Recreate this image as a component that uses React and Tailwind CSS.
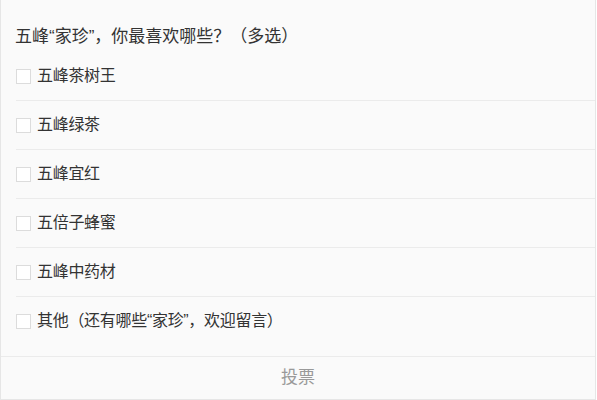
import React, { useState } from "react";

const options = [
  "五峰茶树王",
  "五峰绿茶",
  "五峰宜红",
  "五倍子蜂蜜",
  "五峰中药材",
  "其他（还有哪些“家珍”，欢迎留言）",
];

export default function App() {
  const [checked, setChecked] = useState([]);

  const toggle = (i) => {
    setChecked((c) => (c.includes(i) ? c.filter((x) => x !== i) : [...c, i]));
  };

  return (
    <div
      className="w-[596px] h-[400px] bg-[#fafafa] border-l border-r border-b border-[#e6e6e6] flex flex-col text-[#333]"
      style={{ fontFamily: '"Liberation Sans", "Noto Sans CJK SC", sans-serif' }}
    >
      <div className="px-[14px] pt-[26px] pb-[4px] text-[17px] leading-[22px]">
        五峰“家珍”，你最喜欢哪些？（多选）
      </div>

      <div className="flex flex-col pb-[11px]">
        {options.map((opt, i) => (
          <label
            key={i}
            className={
              "ml-[15px] h-[48px] flex items-center cursor-pointer " +
              (i < options.length - 1 ? "h-[49px] border-b border-[#ebebeb]" : "")
            }
            onClick={() => toggle(i)}
          >
            <span className="w-[15px] h-[15px] border border-[#dcdcdc] bg-white flex items-center justify-center shrink-0">
              {checked.includes(i) && (
                <svg width="10" height="10" viewBox="0 0 10 10">
                  <path d="M1.5 5 L4 7.5 L8.5 2.5" stroke="#07c160" strokeWidth="1.5" fill="none" />
                </svg>
              )}
            </span>
            <span className="ml-[6px] text-[16px] leading-[22px] tracking-[-0.3px]">{opt}</span>
          </label>
        ))}
      </div>

      <button className="flex-1 border-t border-[#ebebeb] text-[17px] text-[#999] flex items-center justify-center">
        投票
      </button>
    </div>
  );
}
